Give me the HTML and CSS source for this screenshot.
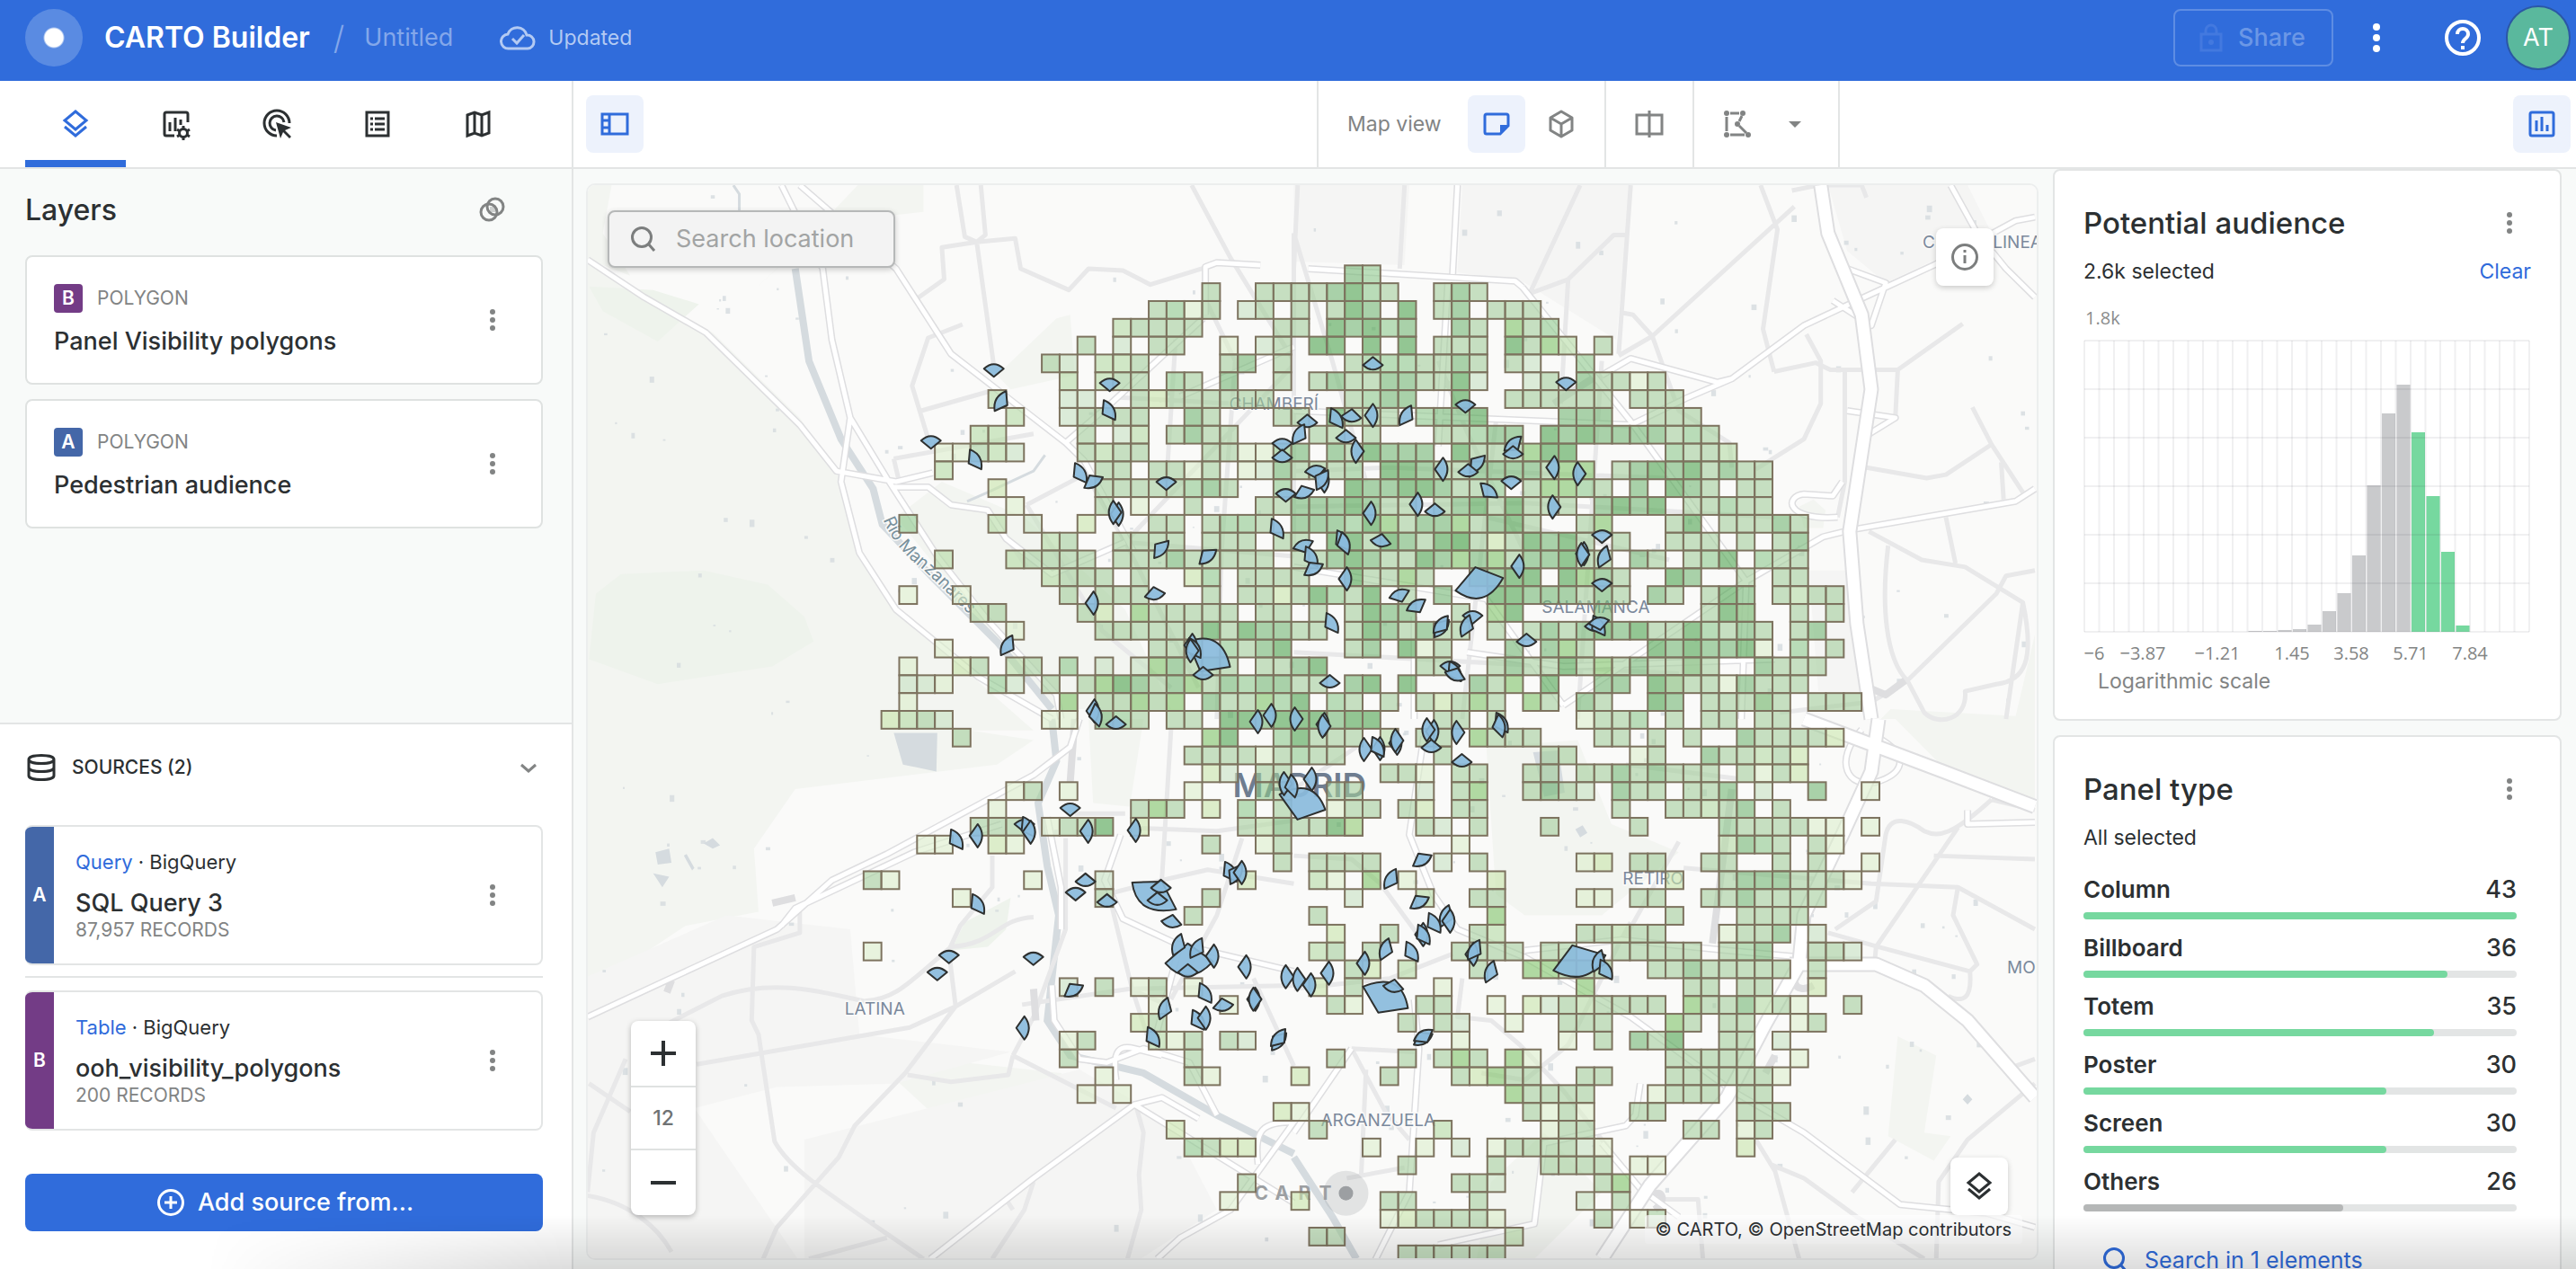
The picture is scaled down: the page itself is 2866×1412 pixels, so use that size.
FILE: index.html
```html
<!DOCTYPE html>
<html lang="en">
<head>
<meta charset="utf-8">
<title>CARTO Builder</title>
<link rel="stylesheet" href="styles.css">
</head>
<body>
<svg class="sprite" aria-hidden="true">
  <symbol id="i-layers" viewBox="0 0 36 36"><path d="M18 4 30 14 18 24 6 14ZM6 21 18 31 30 21" fill="none" stroke="currentColor" stroke-width="3"/></symbol>
  <symbol id="i-dots" viewBox="0 0 36 36"><circle cx="18" cy="9" r="3"/><circle cx="18" cy="18" r="3"/><circle cx="18" cy="27" r="3"/></symbol>
  <symbol id="i-search" viewBox="0 0 36 36"><circle cx="16" cy="16" r="10.500" fill="none" stroke="currentColor" stroke-width="3"/><path d="M23 23 30 31" stroke="currentColor" stroke-width="3"/></symbol>
  <symbol id="i-widgets" viewBox="0 0 36 36"><path d="M31 16V7a2 2 0 0 0-2-2H7a2 2 0 0 0-2 2v22a2 2 0 0 0 2 2h9M11 16v10M17 11v15M23 13v6" fill="none" stroke="currentColor" stroke-width="3"/><circle cx="26" cy="28" r="4.500" fill="none" stroke="currentColor" stroke-width="3"/><path d="M26 20v4M26 32v4M19 24l3 2M30 30l3 2M33 24l-3 2M22 30l-3 2" stroke="currentColor" stroke-width="3"/></symbol>
  <symbol id="i-click" viewBox="0 0 36 36"><path d="M18 31A14 14 0 1 1 32 17M17 25a8 8 0 1 1 9-9" fill="none" stroke="currentColor" stroke-width="3"/><path d="M17 16 34 22 27 25 34 32 32 34 25 27 22 34Z"/></symbol>
  <symbol id="i-legend" viewBox="0 0 36 36"><path d="M6 5H30V31H6ZM10 12h3M10 18h3M10 24h3M15 12h11M15 18h11M15 24h11" fill="none" stroke="currentColor" stroke-width="3"/></symbol>
  <symbol id="i-map" viewBox="0 0 36 36"><path d="M6 8 14 5 22 8 30 5V28L22 31 14 28 6 31ZM14 5V28M22 8V31" fill="none" stroke="currentColor" stroke-width="3"/></symbol>
  <symbol id="i-blend" viewBox="0 0 36 36"><circle cx="21" cy="14" r="9" fill="none" stroke="currentColor" stroke-width="3"/><circle cx="14" cy="20" r="9" fill="none" stroke="currentColor" stroke-width="3"/><path d="M15 14h6v6h-6z" opacity=".35"/></symbol>
  <symbol id="i-panel" viewBox="0 0 36 36"><path d="M4 7H32V29H4ZM12 7V29M4 14h8M4 22h8" fill="none" stroke="currentColor" stroke-width="3"/></symbol>
  <symbol id="i-note" viewBox="0 0 36 36"><path d="M31 20V9a2 2 0 0 0-2-2H7a2 2 0 0 0-2 2v18a2 2 0 0 0 2 2h15Z" fill="none" stroke="currentColor" stroke-width="3"/><path d="M22 30V19H32Z"/></symbol>
  <symbol id="i-cube" viewBox="0 0 36 36"><path d="M18 4 30 11V25L18 32 6 25V11ZM6 11 18 18 30 11M18 18V32" fill="none" stroke="currentColor" stroke-width="3" stroke-linejoin="round"/></symbol>
  <symbol id="i-split" viewBox="0 0 36 36"><path d="M4 8H32V29H4ZM18 3V33" fill="none" stroke="currentColor" stroke-width="3"/></symbol>
  <symbol id="i-poly" viewBox="0 0 36 36"><path d="M6 10V26M10 6h10M23 9l-3 6M20 20l8 8M10 30H26" stroke="currentColor" stroke-width="3"/><circle cx="6" cy="6" r="3"/><circle cx="24" cy="6" r="3"/><circle cx="18" cy="18" r="3"/><circle cx="6" cy="30" r="3"/><circle cx="30" cy="30" r="3"/></symbol>
  <symbol id="i-chart" viewBox="0 0 36 36"><rect x="5" y="5" width="26" height="26" rx="2" fill="none" stroke="currentColor" stroke-width="3"/><path d="M12 14v12M18 10v16M24 19v7" stroke="currentColor" stroke-width="3"/></symbol>
  <symbol id="i-info" viewBox="0 0 36 36"><circle cx="18" cy="18" r="13.500" fill="none" stroke="currentColor" stroke-width="3"/><path d="M18 16v9M18 10v3" stroke="currentColor" stroke-width="3"/></symbol>
  <symbol id="i-db" viewBox="0 0 36 36"><path d="M4 9c0-6 28-6 28 0v18c0 6-28 6-28 0ZM4 9c0 6 28 6 28 0M4 18c0 6 28 6 28 0" fill="none" stroke="currentColor" stroke-width="3"/></symbol>
  <symbol id="i-plus" viewBox="0 0 36 36"><circle cx="18" cy="18" r="13.500" fill="none" stroke="currentColor" stroke-width="3"/><path d="M18 11v14M11 18h14" stroke="currentColor" stroke-width="3"/></symbol>
  <symbol id="i-cloud" viewBox="0 0 40 36"><path d="M10 30a8 8 0 0 1-1-16 11 11 0 0 1 21 1 7.500 7.500 0 0 1 1 15ZM14 19l5 5 8-9" fill="none" stroke="currentColor" stroke-width="3"/></symbol>
  <symbol id="i-help" viewBox="0 0 44 44"><circle cx="22" cy="22" r="18" fill="none" stroke="currentColor" stroke-width="4"/><path d="M16 18c0-8 12-8 12 0 0 5-6 5-6 10M22 31v4" fill="none" stroke="currentColor" stroke-width="4"/></symbol>
  <symbol id="i-lock" viewBox="0 0 36 36"><path d="M7 14H29V32H7ZM12 14V10a6 6 0 0 1 12 0v4" fill="none" stroke="currentColor" stroke-width="3"/><circle cx="18" cy="23" r="3"/></symbol>
</svg>

<header class="topbar">
  <span class="logo"></span>
  <h1 class="product">CARTO Builder</h1>
  <span class="slash">/</span>
  <span class="map-name">Untitled</span>
  <span class="status"><svg class="icon cloud"><use href="#i-cloud"/></svg>Updated</span>
  <span class="grow"></span>
  <button class="share" disabled><svg class="icon"><use href="#i-lock"/></svg>Share</button>
  <button class="bare top-menu" aria-label="More options"><svg class="icon tall"><use href="#i-dots"/></svg></button>
  <button class="bare help" aria-label="Help"><svg class="icon"><use href="#i-help"/></svg></button>
  <button class="avatar">AT</button>
</header>

<div class="workspace">
  <aside class="sidebar">
    <nav class="tabs">
      <button class="tab active" aria-label="Layers"><svg class="icon"><use href="#i-layers"/></svg></button>
      <button class="tab" aria-label="Widgets"><svg class="icon"><use href="#i-widgets"/></svg></button>
      <button class="tab" aria-label="Interactions"><svg class="icon"><use href="#i-click"/></svg></button>
      <button class="tab" aria-label="Legend"><svg class="icon"><use href="#i-legend"/></svg></button>
      <button class="tab" aria-label="Basemap"><svg class="icon"><use href="#i-map"/></svg></button>
    </nav>
    <section class="layers">
      <div class="layers-head"><h2>Layers</h2><button class="bare muted" aria-label="Blending"><svg class="icon"><use href="#i-blend"/></svg></button></div>
      <article class="layer">
        <div><div class="kind"><b class="badge violet">B</b>POLYGON</div><div class="name">Panel Visibility polygons</div></div>
        <button class="bare muted" aria-label="Layer options"><svg class="icon"><use href="#i-dots"/></svg></button>
      </article>
      <article class="layer">
        <div><div class="kind"><b class="badge navy">A</b>POLYGON</div><div class="name">Pedestrian audience</div></div>
        <button class="bare muted" aria-label="Layer options"><svg class="icon"><use href="#i-dots"/></svg></button>
      </article>
    </section>
    <section class="sources">
      <div class="sources-head"><svg class="icon"><use href="#i-db"/></svg><h3>SOURCES (2)</h3><button class="bare muted" aria-label="Collapse sources"><svg class="icon" viewBox="0 0 36 36"><path d="M12 15 20 22 28 15" fill="none" stroke="currentColor" stroke-width="3"/></svg></button></div>
      <article class="source">
        <b class="strip navy">A</b>
        <div class="source-text"><div class="origin"><a href="#query">Query</a> · BigQuery</div><div class="name">SQL Query 3</div><div class="records">87,957 RECORDS</div></div>
        <button class="bare muted" aria-label="Source options"><svg class="icon"><use href="#i-dots"/></svg></button>
      </article>
      <hr>
      <article class="source">
        <b class="strip violet">B</b>
        <div class="source-text"><div class="origin"><a href="#table">Table</a> · BigQuery</div><div class="name">ooh_visibility_polygons</div><div class="records">200 RECORDS</div></div>
        <button class="bare muted" aria-label="Source options"><svg class="icon"><use href="#i-dots"/></svg></button>
      </article>
      <button class="add"><svg class="icon"><use href="#i-plus"/></svg>Add source from...</button>
    </section>
  </aside>

  <main class="stage">
    <div class="toolbar">
      <button class="tool on" aria-label="Toggle left panel"><svg class="icon"><use href="#i-panel"/></svg></button>
      <span class="grow"></span>
      <div class="group view"><span class="view-label">Map view</span><button class="tool on" aria-label="2D"><svg class="icon"><use href="#i-note"/></svg></button><button class="tool" aria-label="3D"><svg class="icon"><use href="#i-cube"/></svg></button></div>
      <div class="group"><button class="tool" aria-label="Split view"><svg class="icon"><use href="#i-split"/></svg></button></div>
      <div class="group last"><button class="tool" aria-label="Selection"><svg class="icon"><use href="#i-poly"/></svg></button><button class="tool" aria-label="Selection modes"><svg class="icon" viewBox="0 0 36 36"><path d="M11 15H25L18 22Z"/></svg></button></div>
      <span class="grow wide"></span>
      <button class="tool on" aria-label="Toggle widgets"><svg class="icon"><use href="#i-chart"/></svg></button>
    </div>

    <div class="content">
      <div class="map">
        <svg class="canvas" viewBox="654 205 1613 1196" preserveAspectRatio="xMidYMid slice" role="img" aria-label="Map of Madrid">
          <rect x="600" y="180" width="1700" height="1260" fill="#fafaf9"/>
          <g class="land">
            <g transform="translate(640 180) scale(.5102 .3954)">
              <path class="park" d="M0 250 150 390 300 480 490 720 590 910 620 1100 700 1260 1000 1600H0ZM0 60H80L60 200 120 320 0 260ZM390 360 480 250 620 60H760V140L560 170 440 300Z"/>
              <path class="park" d="M920 600 1050 440 1080 430 1090 600 950 640ZM800 900 980 1000 1200 1260 1300 1540H1040L700 1000Z"/>
              <path class="park deep" d="M30 1400 45 1215 100 1160 280 1150 420 1190 500 1280 520 1350 430 1420 180 1470ZM30 350 170 360 270 400 180 505 60 420Z"/>
              <path class="water" d="M480 300 510 560 580 780 650 920 670 1020 780 1170 920 1350 1040 1540"/>
              <path class="water thin" d="M345 65 358 90V140M855 955 900 930 1000 870 1025 825"/>
            </g>
            <g transform="translate(1440 180) scale(.5357 .3954)">
              <path class="block" d="M0 65H240L230 290 0 280ZM350 65H700L670 500 480 340 340 310ZM1110 65H1400L1450 200 1230 340 1150 250ZM1070 1150H1150L1190 1500 1090 1490Z"/>
              <path class="park" d="M1050 970 1080 950 1105 980 1100 1030 1060 1030ZM1240 1540 1500 1560 1540 1330V1568H1220Z"/>
            </g>
            <g transform="translate(640 800) scale(.5102 .3903)">
              <path class="park" d="M0 0H700L1000 60 920 130 480 200 390 370 400 550 240 590 0 800ZM1120 0H1240L1210 250 1130 240ZM700 1030 850 980 1060 1010 1180 1110 940 1220 800 1150Z"/>
              <path class="block" d="M0 750 330 560 600 600 620 900 950 950 700 1040 440 1050 260 1110 500 1568H0ZM500 1200 1100 1000 1300 1150 1400 1400 1200 1568H500Z"/>
              <path class="park deep" d="M820 660 850 580 950 510 940 600 900 650Z"/>
              <path class="lake" d="M695 40H790L788 150 715 130Z"/>
              <path class="lake" d="M175 380 205 370 210 410 180 415ZM170 440 205 450 190 480ZM280 355 300 340 316 360 300 370ZM237 390 243 385 260 425 255 432Z"/>
              <path class="water" d="M1040 0 1050 120 1010 240 1030 420 1055 560 1030 860 1080 960 1240 1010 1400 1130 1568 1240"/>
            </g>
            <g transform="translate(1440 800) scale(.5357 .3903)">
              <path class="park" d="M400 80 590 60 660 300 800 380 640 560 480 560 420 500ZM1255 905 1335 960 1310 1180 1365 1190 1330 1260 1235 1190ZM1250 0H1540V240L1380 180ZM410 1320 520 1180 640 1350 500 1540H380Z"/>
              <path class="lake" d="M497 95 550 90 563 210 520 222ZM585 315 600 303 610 325 595 338ZM1390 1085 1400 1070 1410 1085 1400 1100Z"/>
              <path class="water" d="M0 1250 80 1420 130 1540"/>
            </g>
          </g>
          <g id="buildings"></g>
          <g class="roads">
            <g transform="translate(640 180) scale(.5102 .3954)">
              <path class="minor" d="M832 65 850 210 876 225 895 205 885 65M876 225 960 215 972 300 1077 360 1120 300 1195 305 1255 345 1380 295M876 225 800 240 805 330 745 385M876 225 913 570M845 457 770 495 735 630 775 800M755 700 905 645M695 835 1000 765M695 835 705 890M1345 65 1430 270 1568 560M1180 662 1568 690M1200 1070 1568 1110M985 965 1110 880M985 965 1150 1320 1300 1480M910 1000 985 1140M1310 500 1290 900M1440 560 1410 1100 1400 1568M1200 1070 1568 570M1110 870 1200 1070 1360 1480M1380 400 1440 560M1568 200V1100"/>
              <path class="case" d="M27 275 150 380 285 480 490 740 570 870 700 900 780 875M450 65 540 300 560 500 600 720 580 900 620 1100 700 1260 880 1450 1040 1568M490 65 700 300 820 540 910 630 1070 790 1110 840 1220 1100M600 720 680 890 790 1110 900 1290 1050 1500 1060 1568M690 915 770 915 820 965 900 980 940 1060 1040 1160 1200 1070M1375 430V295L1400 283 1495 290M1070 790 1160 690 1370 440M1320 660 1568 520"/>
              <path class="major" d="M27 275 150 380 285 480 490 740 570 870 700 900 780 875M450 65 540 300 560 500 600 720 580 900 620 1100 700 1260 880 1450 1040 1568M490 65 700 300 820 540 910 630 1070 790 1110 840 1220 1100M600 720 680 890 790 1110 900 1290 1050 1500 1060 1568M690 915 770 915 820 965 900 980 940 1060 1040 1160 1200 1070M1375 430V295L1400 283 1495 290M1070 790 1160 690 1370 440M1320 660 1568 520"/>
            </g>
            <g transform="translate(1440 180) scale(.5357 .3954)">
              <path class="minor" d="M8 65 0 300M230 65 220 300M595 65 490 370 570 330 665 205H695M700 65 675 540M970 65 1005 190 975 470 998 590M1040 125 745 490 675 545M685 425 705 430 745 490 800 700 905 790 910 860M570 330 555 680M998 590 1085 565 1115 585H1255L1390 455M1065 485 1095 560V680L1060 780 960 865M1145 585V900L1130 1000M1255 585 1250 720M1190 860 1315 890 1355 880 1450 795 1410 690M1450 795 1515 930M1470 845 1475 950M1195 1040 1305 1120 1395 1140 1515 1240 1480 1568M1235 1080C1220 1250 1230 1400 1275 1460M1540 1150 1480 1165 1460 1215 1275 1460 1200 1520 1010 1550M1515 1240C1540 1400 1520 1460 1460 1470L1395 1490C1400 1570 1340 1590 1310 1550L1275 1460M1355 1000 1375 1130M0 870 200 860 780 890M0 970 480 960 1000 1000M0 200 80 560 150 900M300 560 360 760 480 1100M400 1000 780 1120M0 1380 800 1440M420 730 350 1568M640 560 590 1568M1035 80 1090 65 1180 65 1190 100"/>
              <path class="case" d="M340 65 330 315M30 300 460 335 475 352M475 352 700 730 940 1180M0 700 700 740M640 600 700 553 880 620 910 610M1365 65 1420 200 1480 300 1540 380M620 610 540 680M1540 155 1500 165 1330 290 1170 390 1060 460 910 610 815 665 700 740M1195 1480 1230 1500 1270 1460M1540 920 1500 955 1160 1035 1100 1055 940 1180 560 1530M0 1140 400 1230 560 1530M250 1280 250 1568M320 340 300 800M1120 390 1200 460 1230 340 1150 300M1150 700 1250 720 1190 770M1130 1000C1020 1010 1020 940 1060 935L1120 940 1140 900M360 1380 560 1420 1000 1400M940 1180 930 1568"/>
              <path class="major" d="M340 65 330 315M30 300 460 335 475 352M475 352 700 730 940 1180M0 700 700 740M640 600 700 553 880 620 910 610M1365 65 1420 200 1480 300 1540 380M1540 155 1500 165 1330 290 1170 390 1060 460 910 610 815 665 700 740M1540 920 1500 955 1160 1035 1100 1055 940 1180 560 1530M0 1140 400 1230 560 1530M250 1280 250 1568M320 340 300 800M1120 390 1200 460 1230 340 1150 300M1150 700 1250 720 1190 770M1130 1000C1020 1010 1020 940 1060 935L1120 940 1140 900M360 1380 560 1420 1000 1400M940 1180 930 1568"/>
              <path class="case big" d="M1095 65 1110 200 1180 430 1200 640 1155 1040 1170 1300 1200 1568"/><path class="major big" d="M1095 65 1110 200 1180 430 1200 640 1155 1040 1170 1300 1200 1568"/>
            </g>
            <g transform="translate(640 800) scale(.5102 .3903)">
              <path class="minor" d="M200 870 320 790C440 740 540 780 630 805 700 800 730 750 820 650 920 640 920 570 1000 565M910 390V480L840 590 815 660 830 820 720 1010 610 1160 575 1250 440 1450 410 1540M490 550 490 610 390 650 385 860 400 900 435 1205C470 1290 560 1360 760 1540M265 985 730 880 830 820 960 720M725 1015 820 1035 945 1015 955 960M955 960 1180 1110M27 1360C120 1380 180 1450 210 1520M510 1540 680 1480M110 970 70 1090 40 1180 27 1350M30 1040 120 1120M1225 1110 1240 1180 1230 1300 1235 1400 1205 1540M1000 1320 980 1400 910 1540M975 815 1210 770 1300 820M1210 770 1568 760M1090 270H1200M1210 310 1400 320 1568 290M1070 340V600L1000 850 955 960M1170 530 1215 770 1260 950M1300 30 1280 460 1160 500M1480 740 1568 990M1455 340 1400 560 1300 800M1280 460 1380 430 1568 470M940 1370 955 1400"/>
              <path class="case" d="M27 850 200 745 440 600 560 460 680 385 1000 160 1080 80 1100 0M450 590 480 540 740 380 930 300M775 1540 1000 1310 1220 1100 1568 1380M1270 1540 1320 1480 1430 1400 1568 1150M1090 0 1080 180M1190 330 1155 460 1195 570 1310 640 1568 720M1040 760 1045 860 1100 970 1160 980 1240 940 1340 980 1400 1130M1220 1100 1280 1080 1360 1140M1180 1030C1170 940 1190 930 1220 940L1280 960M1060 600V480L1030 280M1000 770 1005 860M1490 1270C1480 1170 1500 1150 1568 1150M1320 640 1260 940M200 780 210 745M430 525 480 510"/>
              <path class="major" d="M27 850 200 745 440 600 560 460 680 385 1000 160 1080 80 1100 0M450 590 480 540 740 380 930 300M775 1540 1000 1310 1220 1100 1568 1380M1270 1540 1320 1480 1430 1400 1568 1150M1190 330 1155 460 1195 570 1310 640 1568 720M1040 760 1045 860 1100 970 1160 980 1240 940 1340 980 1400 1130M1220 1100 1280 1080 1360 1140M1180 1030C1170 940 1190 930 1220 940L1280 960M1060 600V480L1030 280M1490 1270C1480 1170 1500 1150 1568 1150M1320 640 1260 940"/>
            </g>
            <g transform="translate(1440 800) scale(.5357 .3903)">
              <path class="minor" d="M0 390 120 400 180 470 260 620M0 200 130 80M690 130 920 170M810 425 1200 470 1380 480 1540 600M1125 600 1210 520 1230 330C1240 270 1280 290 1310 320 1340 340 1370 330 1450 230M1540 260 1450 230M1380 310 1240 590 1210 650 1205 720M1380 480 1370 560 1420 700 1405 720 1215 650 1110 610M1405 720C1410 800 1390 810 1360 790M1540 1040 1400 1200 1340 1320 1335 1540M1540 970 1500 990M990 1270 1060 1310 1170 1420 1310 1540M120 940 250 950M120 940 190 1120 240 1200M150 1000 140 1300M110 1310 230 1280M350 740 340 850 410 860 470 930 560 1060 640 1200 720 1340M390 1010 480 1030 570 930 680 630 700 580M750 1370H840L850 1540M800 350 690 620M1160 1350 1250 1200M0 770 200 740 330 670M1330 390 1540 400M960 1200 1000 1290 1050 1540"/>
              <path class="case" d="M270 50 240 330 290 500 340 600 480 680 700 850 910 1060 1060 1180 1260 1385 1440 1410 1540 1450M120 940 0 1180M250 800 260 940 240 1350 160 1568M720 1040 710 1130 690 1160 520 1210 500 1440 300 1500M1180 30C1120 120 1150 200 1210 180 1260 160 1290 110 1210 50M1540 295 1400 300 1400 260M480 660 680 630 900 660 1060 680M1070 680C1020 740 1040 790 1080 760M980 1010 1000 960M910 200 870 640M640 1210 720 1340 800 1420M740 1370C760 1330 780 1370 750 1400"/>
              <path class="major" d="M270 50 240 330 290 500 340 600 480 680 700 850 910 1060 1060 1180 1260 1385 1440 1410 1540 1450M120 940 0 1180M250 800 260 940 240 1350 160 1568M1180 30C1120 120 1150 200 1210 180 1260 160 1290 110 1210 50M1540 295 1400 300 1400 260M480 660 680 630 900 660 1060 680M720 1040 710 1130 690 1160 520 1210 500 1440 300 1500M640 1210 720 1340 800 1420"/>
              <path class="case big" d="M1215 0 1200 150 1140 330 1060 560 1050 700 980 870 900 1080 740 1330 640 1540M1030 700 1210 700 1310 760 1400 860 1540 1080M1060 0 1350 150 1540 250"/><path class="major big" d="M1215 0 1200 150 1140 330 1060 560 1050 700 980 870 900 1080 740 1330 640 1540M1030 700 1210 700 1310 760 1400 860 1540 1080M1060 0 1350 150 1540 250"/>
            </g>
          </g>
          <g class="place">
            <text x="1368" y="456">CHAMBERÍ</text><text x="1716" y="682">SALAMANCA</text><text x="1806" y="984">RETIRO</text>
            <text x="940" y="1129">LATINA</text><text x="1470" y="1253">ARGANZUELA</text><text x="2234" y="1083">MORATALAZ</text><text x="2140" y="276">CIUDAD LINEAL</text>
            <text class="city" x="1372" y="887">MADRID</text>
            <path id="river" d="M983 578Q995 610 1030 636L1100 704" fill="none"/>
            <text class="river"><textPath href="#river">Río Manzanares</textPath></text>
          </g>
          <g class="mark"><circle cx="1498" cy="1328" r="25" opacity=".25"/><circle cx="1498" cy="1328" r="8"/><text x="1396" y="1335">C</text><text x="1419" y="1335">A</text><text x="1445" y="1335">R</text><text x="1468" y="1335">T</text></g>
          <g id="cells"></g>
          <g id="fans"></g>
        </svg>
        <label class="search"><svg class="icon"><use href="#i-search"/></svg><input type="text" placeholder="Search location" aria-label="Search location"></label>
        <button class="float info" aria-label="Map information"><svg class="icon"><use href="#i-info"/></svg></button>
        <div class="zoom"><button aria-label="Zoom in"><svg class="icon" viewBox="0 0 36 36"><path d="M18 4V32M4 18H32" stroke="currentColor" stroke-width="4"/></svg></button><span>12</span><button aria-label="Zoom out"><svg class="icon" viewBox="0 0 36 36"><path d="M4 18H32" stroke="currentColor" stroke-width="4"/></svg></button></div>
        <button class="float basemap" aria-label="Legend"><svg class="icon"><use href="#i-layers"/></svg></button>
        <div class="credit">© CARTO, © OpenStreetMap contributors</div>
      </div>

      <aside class="widgets">
        <section class="widget">
          <div class="widget-head"><h2>Potential audience</h2><button class="bare muted" aria-label="Widget options"><svg class="icon"><use href="#i-dots"/></svg></button></div>
          <div class="selected"><span>2.6k selected</span><a href="#clear">Clear</a></div>
          <div class="max">1.8k</div>
          <svg class="chart" viewBox="0 0 498 364" role="img" aria-label="Histogram of potential audience"><g id="histogram"></g></svg>
          <div class="scale">Logarithmic scale</div>
        </section>
        <section class="widget">
          <div class="widget-head"><h2>Panel type</h2><button class="bare muted" aria-label="Widget options"><svg class="icon"><use href="#i-dots"/></svg></button></div>
          <div class="selected"><span>All selected</span></div>
          <ul class="types">
            <li><b>Column</b><span>43</span><i><em style="width:100%"></em></i></li>
            <li><b>Billboard</b><span>36</span><i><em style="width:84%"></em></i></li>
            <li><b>Totem</b><span>35</span><i><em style="width:81%"></em></i></li>
            <li><b>Poster</b><span>30</span><i><em style="width:70%"></em></i></li>
            <li><b>Screen</b><span>30</span><i><em style="width:70%"></em></i></li>
            <li class="others"><b>Others</b><span>26</span><i><em style="width:60%"></em></i></li>
          </ul>
          <button class="bare find"><svg class="icon"><use href="#i-search"/></svg>Search in 1 elements</button>
        </section>
      </aside>
    </div>
  </main>
</div>
<div class="shade"></div>
<script src="map.js"></script>
</body>
</html>
```
FILE: styles.css
```css
* { box-sizing: border-box; }
body { margin: 0; height: 100vh; display: flex; flex-direction: column; overflow: hidden; font-family: Inter, "Liberation Sans", sans-serif; font-size: 23px; line-height: 32px; color: #2c3032; background: #f8faf9; }
h1, h2, h3, ul { margin: 0; padding: 0; font-weight: 500; }
button { font: inherit; color: inherit; border: 0; background: none; padding: 0; }
a { color: #2f6bdb; text-decoration: none; }
.sprite { position: absolute; width: 0; height: 0; }
.icon { width: 36px; height: 36px; flex: none; display: block; fill: currentColor; }
.grow { flex: 1; }
.bare { display: flex; align-items: center; justify-content: center; }
.muted { color: #828484; }

.topbar { height: 90px; flex: none; display: flex; align-items: center; padding: 0 6px 6px 28px; background: #306cdb; color: #fff; }
.logo { width: 64px; height: 64px; border-radius: 50%; background: radial-gradient(circle, #fff 10px, #5a8be2 12px); }
.product { margin-left: 24px; font-size: 32px; font-weight: 600; line-height: 40px; }
.slash { margin-left: 26px; font-size: 36px; font-weight: 300; color: #83a7ea; }
.map-name { margin-left: 22px; font-size: 27px; color: #83a7ea; }
.status { display: flex; align-items: center; gap: 14px; margin-left: 52px; font-size: 23px; color: #b3caf3; }
.icon.cloud { width: 40px; }
.share { display: flex; align-items: center; gap: 12px; width: 178px; height: 64px; padding: 0 22px; border: 2px solid #5e8de3; border-radius: 8px; color: #6b97e6; font-size: 27px; font-weight: 500; }
.share .icon { color: #4379df; }
.top-menu { width: 64px; margin-left: 16px; }
.icon.tall { width: 48px; height: 48px; }
.help { margin-left: 42px; width: 44px; }
.help .icon { width: 44px; height: 44px; }
.avatar { width: 72px; height: 72px; margin-left: 26px; border: 2px solid #2b57a5; border-radius: 50%; background: #5ab89d; font-size: 27px; }

.workspace { flex: 1; min-height: 0; display: flex; }
.sidebar { width: 638px; flex: none; display: flex; flex-direction: column; border-right: 2px solid #e3e5e5; }
.tabs { height: 98px; flex: none; display: flex; padding-left: 28px; background: #fff; border-bottom: 2px solid #e3e5e5; }
.tab { width: 112px; display: flex; align-items: center; justify-content: center; border-bottom: 8px solid transparent; border-top: 8px solid transparent; }
.tab.active { color: #306cdb; border-bottom-color: #306cdb; }
.layers { flex: 1; padding: 20px 32px 0 28px; display: flex; flex-direction: column; gap: 16px; }
.layers-head { display: flex; justify-content: space-between; align-items: center; height: 52px; margin-bottom: 8px; padding-right: 38px; }
h2 { font-size: 32px; line-height: 40px; }
.layer { display: flex; align-items: center; justify-content: space-between; height: 144px; padding: 0 36px 0 30px; background: #fff; border: 2px solid #dfe2e1; border-radius: 8px; }
.kind { display: flex; align-items: center; gap: 16px; font-size: 21px; color: #828484; }
.badge { width: 32px; height: 32px; border-radius: 4px; color: #fff; font-weight: 600; font-size: 21px; text-align: center; }
.violet { background: #733c86; }
.navy { background: #4467a8; }
.name { font-size: 27px; line-height: 32px; font-weight: 500; }
.layer .name { margin-top: 16px; }
.sources { flex: none; background: #fff; border-top: 2px solid #e3e5e5; padding: 0 32px 42px 28px; }
.sources-head { display: flex; align-items: center; height: 96px; margin-bottom: 16px; }
.sources-head h3 { flex: 1; margin-left: 16px; font-size: 21px; }
.source { display: flex; align-items: center; height: 156px; padding-right: 36px; border: 2px solid #e3e5e5; border-left: 0; border-radius: 8px; overflow: hidden; }
.strip { align-self: stretch; width: 32px; display: flex; align-items: center; justify-content: center; color: #fff; font-size: 21px; font-weight: 600; }
.source-text { flex: 1; padding-left: 24px; }
.origin { font-size: 22px; margin-bottom: 14px; }
.records { font-size: 21px; line-height: 28px; color: #828484; }
hr { border: 0; border-top: 2px solid #e3e5e5; margin: 12px 0 14px; }
.add { width: 100%; height: 64px; margin-top: 48px; display: flex; align-items: center; justify-content: center; gap: 12px; background: #306cdb; border-radius: 8px; color: #fff; font-size: 27px; font-weight: 500; }

.stage { flex: 1; min-width: 0; display: flex; flex-direction: column; }
.toolbar { height: 98px; flex: none; display: flex; align-items: center; padding: 0 6px 0 14px; background: #fff; border-bottom: 2px solid #e3e5e5; }
.tool { width: 64px; height: 64px; display: flex; align-items: center; justify-content: center; border-radius: 8px; color: #828484; }
.tool.on { background: #edf2fc; color: #306cdb; }
.group { height: 96px; display: flex; align-items: center; padding: 0 16px; border-left: 2px solid #e3e5e5; }
.group.view { gap: 8px; }
.view-label { width: 142px; padding-left: 16px; color: #828484; font-size: 23px; white-space: nowrap; }
.group.last { border-right: 2px solid #e3e5e5; }
.content { flex: 1; min-height: 0; display: flex; }
.map { position: relative; flex: 1; min-width: 0; margin: 16px 16px 10px 14px; border: 2px solid #eceeee; border-radius: 10px; overflow: hidden; }
.canvas { display: block; width: 100%; height: 100%; }
.roads path { fill: none; vector-effect: non-scaling-stroke; stroke-linejoin: round; }
.roads .minor { stroke: #e8e8e9; stroke-width: 5px; }
.roads .case { stroke: #dedee0; stroke-width: 8px; }
.roads .major { stroke: #fff; stroke-width: 5px; }
.roads .case.big { stroke-width: 17px; }
.roads .major.big { stroke-width: 13px; }
.park { fill: #f3f5f1; }
.park.deep { fill: #eef3ec; }
.block { fill: #f5f5f4; }
.lake, #buildings { fill: #d5dbdf; }
.water { fill: none; stroke: #d5dbdf; stroke-width: 8px; vector-effect: non-scaling-stroke; }
.water.thin { stroke-width: 3px; }
.place { font-family: Inter, sans-serif; font-size: 19px; fill: #7b899c; }
.place text { stroke: #fafaf9; stroke-width: 3px; paint-order: stroke; }
.place .city { font-size: 37px; font-weight: 600; fill: #6f7d90; }
.place .river { font-size: 19px; fill: #78909c; }
.mark { fill: #9c9fa2; font-size: 21px; font-weight: 700; }
#cells rect { stroke: #7d735f; stroke-width: 2px; fill-opacity: .6; }
#fans path { fill: #8abbdc; fill-opacity: .92; stroke: #2e302f; stroke-width: 2px; stroke-linejoin: round; vector-effect: non-scaling-stroke; }
.search { position: absolute; left: 22px; top: 28px; width: 320px; height: 64px; display: flex; align-items: center; gap: 16px; padding: 0 20px; background: #f3f3f3; border: 2px solid #b6b8b8; border-radius: 8px; box-shadow: 0 2px 6px #0003; color: #7c7e7e; }
.search input { width: 220px; border: 0; background: none; font: inherit; font-size: 27px; outline: 0; }
.search input::placeholder { color: #a2a4a4; opacity: 1; }
.float { position: absolute; width: 64px; height: 64px; display: flex; align-items: center; justify-content: center; background: #fff; border-radius: 8px; box-shadow: 0 2px 6px #0003; }
.info { right: 48px; top: 48px; color: #7c7e7e; }
.basemap { right: 32px; bottom: 48px; }
.zoom { position: absolute; left: 48px; bottom: 48px; width: 72px; background: #fff; border-radius: 8px; box-shadow: 0 2px 6px #0004; text-align: center; font-weight: 500; }
.zoom button, .zoom span { height: 72px; width: 72px; display: flex; align-items: center; justify-content: center; color: #2c3032; }
.zoom span { color: #6f7374; border: solid #dfe2e1; border-width: 2px 0; }
.credit { position: absolute; right: 16px; bottom: 16px; padding: 0 12px; background: #fffa; border-radius: 4px; font-size: 20px; line-height: 32px; }

.widgets { width: 582px; flex: none; padding-right: 16px; display: flex; flex-direction: column; gap: 16px; overflow: hidden; }
.widget { flex: none; background: #fff; border: 2px solid #e3e5e5; border-radius: 8px; padding: 36px 32px 26px; }
.widget-head { display: flex; align-items: center; justify-content: space-between; height: 44px; padding-right: 6px; }
.widget h2 { font-size: 33px; }
.selected { display: flex; justify-content: space-between; margin-top: 16px; height: 32px; }
.max { margin-top: 20px; font-family: "Open Sans", sans-serif; font-size: 20px; color: #8a8c8c; padding-left: 2px; }
.chart { display: block; width: 100%; margin-top: 8px; overflow: visible; font-family: "Open Sans", sans-serif; font-size: 20px; fill: #828484; }
.scale { padding-left: 16px; color: #828484; }
#histogram .axis { stroke: #2c3032; stroke-opacity: .07; stroke-width: 2px; }
#histogram .out { fill: #c9cacc; }
#histogram .in { fill: #76d89f; }
.types { list-style: none; display: grid; gap: 14px; margin-top: 24px; padding-right: 16px; }
.types li { display: grid; grid-template-columns: 1fr auto; row-gap: 7px; font-size: 27px; line-height: 36px; }
.types b { font-weight: 600; font-size: 26px; }
.types i { grid-column: 1 / 3; height: 8px; border-radius: 4px; background: #e3e5e5; }
.types em { display: block; height: 8px; border-radius: 4px; background: #76d89f; }
.types .others em { background: #b5b7b7; }
.find { margin: 36px 0 0 18px; gap: 14px; color: #2f6bdb; font-size: 25px; }
.shade { position: fixed; left: 0; right: 0; bottom: 0; height: 60px; pointer-events: none; background: linear-gradient(to top, #0002, #0000); -webkit-mask: linear-gradient(to right, #0000 8%, #000 22%); mask: linear-gradient(to right, #0000 8%, #000 22%); }
```
FILE: map.js
```js
const NS = 'http://www.w3.org/2000/svg';
function add(parent, tag, attrs, text) {
  const el = document.createElementNS(NS, tag);
  for (const k in attrs) el.setAttribute(k, attrs[k]);
  if (text) el.textContent = text;
  parent.appendChild(el);
}

// Audience grid: one line per row, each run is "first column:shade codes".
const shades = { 1: '#dceecb', d: '#c6e1c1', y: '#c8e4aa', 2: '#b4daa3', 3: '#a3cd9b', m: '#8ec88c', g: '#7fc367', 4: '#73b673', 5: '#4ea34e' };
const grid = `27:4m
19:3 22:333345m3 32:343
16:3m13 21:d3.3.354.5 32:34.333
14:23333 23:33.545m4 33:43.g3m
12:3.d.33 20:1.d3.55.5.5 32:333 36:53g2 41:3
10:3d.223 20:34.3 27:3mmm3343 36:3d..m
11:2.23.. 15:3 17:m3.4..3 25:343344335d 37:d3.43313
7:2 11:dd..3y333333 27:3m44..5 36:333333.333
8:2..d3333 18:43 23:33.5333.m445 39:444..333
6:22 12:3.d2.3433 25:33.3...33m44.54544443m3
4:1132d 12:3233 19:3311m4.435444.5333g55.....m332
4:2 13:33.3313.1d4333m.5543344443gg.345453433
7:y 13:33333m43..m...54455433m.3ggm3.4.543.33
8:1 13:3.1..3...334445433.34535333.4545.33m33
2:m....2.d..y...33.3mm3.444m5g344g3453..3g...35.33343
10:23..3333.333.33.55354354 33:43y35453.3..333.3.34
4:2...23333.3334333 21:33.33454335 32:4g4g344533.43.3m5.m33
10:2333.3..ym.3333..533g3..4455.5g43..54..3.33
2:1..1 11:3.333...3.33y35m35.3.4..55444343.43.354.3233
6:23 12:3y.g33333.33.3.3544..3.g5....4.....354 49:3..3.3
8:1 13:3333335354433.3543433.3.3434545335m343.34
4:1 16:333.m345...34.513...4.4g3...5454451.m.3
2:1..y3.23.m.d.dg4333.3345 28:...33..343353g34334 46:33..4333
2:dd1..md.3.3g5434g34m4433 27:45.5...43g.5..44.53 45:3331 49:4333
2:1 11:g.33g3g.433gm5.m3.3.3y3g3.g3.43..54.3334 50:33.333
1:y23d 10:11.4m3.33.554555455 32:33 35:3 40:133m.3.33.33
5:3 19:g5..m5333.2.33.g333 41:33.3.3..43333y
18:333313m33 32:3 38:33 41:..13..43323y
19:yd.33 29:331.33 37:33.33434333.313y
8:13.1 18:1 22:m3 26:33 31:d.3g 37:343d.433.334 50:d..4..1
7:1 15:3g3.y.m.3..133 30:3y.33 42:3..332 48:34.3
6:333.1335.y 21:3243354 27:y 31:3d.3...3....3 48:m33331 54:1.1
3:11..y1 19:3..13 33:1 48:24m3.31
23:3.3333 32:d.3 40:1y.33..33..3.3..1
0:31 9:1...d 21:y 25:21.g.1 35:y 45:y..34443331
5:1 13:3 19:3 27:d...2..33 40:11.33..3343333
18:3 25:3 35:g 45:3 49:3333
26:y..3 34:32 40:33233 48:1334.d
0:1 25:23.3 33:3333 38:33..33333.3m4..33d
27:3y.2...3..gg333..33433333.3
11:d.3.13.1 25:y.3 32:1.......g 46:33.33..y
16:1 20:1 26:31 31:33..1.yd323333.g334231..3
15:y3 30:3.3d 36:1..333...g3.33..13
11:13 16:213.3d 33:1.....1.3.435 48:33.d
11:3 18:3 26:3...3.3g3.g1 45:33333..1
13:1 18:31 24:y....3 33:3yg33 40:33 45:3333331
12:1.1 36:g3333 44:1333 49:33
23:y1 37:3131 43:33 49:333
17:y 25:3 32:2 38:133 46:33 49:13
18:m3yy 28:1..1.d 35:13333d1 49:y
30:3 35:3 38:3333 43:11
21:3 33:33d 41:3g
20:1 24:y 29:33 34:3 40:d.3
29:1y33331 41:3.13
25:33 36:2
30:333333`;
const cells = document.getElementById('cells');
grid.split('\n').forEach((line, row) => line.split(' ').forEach(run => {
  const [start, codes] = run.split(':');
  [...(codes || '')].forEach((c, i) => {
    if (shades[c]) add(cells, 'rect', { x: 961 + 19.84 * (+start + i), y: 295 + 19.84 * row, width: 19.84, height: 19.84, fill: shades[c] });
  });
}));

// Visibility fans: x, y, facing angle.
const fans = `1528,404,180 1743,427,0 1631,452,0 1455,468,180 1447,484,300 1486,466,60 1504,462,185 1526,462,90 1566,463,300 1498,485,180 1511,502,270 1427,495,0 1427,507,180 1685,495,320 1684,503,180 1604,522,90 1643,515,130 1634,523,180 1728,520,90 1758,527,270 1682,537,0 1656,547,40 1464,525,350 1472,535,90 1470,533,120 1431,551,0 1451,547,160 1298,538,0 1243,572,90 1241,570,270 1524,571,90 1576,561,90 1597,567,180 1730,564,270 1420,589,60 1291,610,130 1343,618,140 1451,608,340 1458,620,60 1461,632,150 1493,602,60 1495,605,75 1537,601,190 1497,644,90 1285,660,170 1481,694,60 1558,663,340 1577,675,330 1689,630,90 1603,698,130 1605,696,310 1639,687,0 1633,697,290 1699,712,180 1614,743,0 1618,748,60 1620,750,200 1480,758,180 1339,749,180 1325,718,90 1328,722,60 1327,724,270 1761,616,90 1762,617,270 1783,597,0 1786,620,290 1783,651,0 1775,695,180 1778,697,60 1780,694,350 1106,412,0 1115,447,300 1036,492,0 1084,512,60 1235,428,0 1233,457,60 1201,527,60 1216,535,150 1215,671,90 1122,719,300 1216,791,90 1219,796,80 1242,804,180 1398,803,90 1413,796,90 1443,800,270 1472,806,90 1474,808,270 1670,805,60 1668,808,80 1594,814,90 1590,812,270 1623,815,270 1593,830,180 1520,834,270 1534,833,90 1532,832,60 1553,827,90 1555,824,270 1627,846,180 1458,867,90 1431,872,270 1437,875,80 1191,901,0 1209,925,90 1262,924,90 1063,935,60 1086,930,90 1140,919,0 1143,921,60 1145,926,90 1208,979,180 1197,995,0 1232,1002,180 1087,1007,60 1304,1025,190 1368,971,60 1374,972,120 1380,971,90 1312,1052,290 1333,1056,300 1349,1064,90 1385,1076,90 1433,1087,270 1340,1106,60 1361,1118,170 1395,1112,90 1397,1112,270 1297,1123,290 1332,1136,60 1340,1133,90 1282,1155,60 1422,1158,130 1424,1156,310 1150,1067,0 1056,1065,0 1043,1084,0 1194,1101,150 1138,1144,90 1582,956,150 1549,979,300 1579,1003,150 1610,1020,290 1612,1025,90 1595,1028,60 1582,1040,90 1583,1041,60 1543,1057,290 1570,1060,60 1517,1072,90 1477,1083,90 1446,1090,270 1457,1096,90 1638,1062,90 1642,1058,300 1660,1082,290 1583,1155,150 1585,1154,330`;
const layer = document.getElementById('fans');
['M1336 747 1322 714Q1360 700 1369 742Z', 'M1642 631 1673 643Q1652 680 1620 657Z', 'M1444 912 1424 884Q1462 864 1475 901Z', 'M1309 1012 1293 981 1260 982Q1265 1020 1309 1012Z', 'M1322 1050 1297 1072Q1322 1100 1350 1070Z', 'M1750 1052 1787 1063Q1768 1100 1729 1080Z', 'M1534 1127 1517 1098Q1560 1080 1567 1122Z'].forEach(d => add(layer, 'path', { d }));
(fans + ' 1292,986,180 1288,1000,180 1322,1080,180 1780,1070,290 1786,1080,60 1551,1097,190').split(' ').forEach(f => {
  const [x, y, a] = f.split(',').map(Number);
  const s = 1 + 0.18 * Math.abs(Math.sin(a * Math.PI / 180));
  add(layer, 'path', { d: 'M0 7 -11 -2Q0 -12 11 -2Z', transform: `translate(${x} ${y}) rotate(${a}) scale(${s} 1)` });
});

// Small building footprints scattered outside the centre.
const buildings = document.getElementById('buildings');
let seed = 7;
const rnd = () => (seed = (seed * 16807) % 2147483647) / 2147483647;
for (let i = 0; i < 260; i++) {
  const x = 670 + rnd() * 1590, y = 215 + rnd() * 1180, s = 2 + rnd() * 4;
  add(buildings, 'rect', { x, y, width: s, height: s * (0.6 + rnd()), opacity: 0.8 });
}

// Histogram of audience, 30 bins.
const h = document.getElementById('histogram');
const bins = { 11: 1, 12: 1, 13: 2, 14: 3, 15: 8, 16: 23, 17: 43, 18: 85, 19: 163, 20: 243, 21: 275, 22: 222, 23: 151, 24: 89, 25: 7 };
for (const b in bins) add(h, 'rect', { class: b > 21 ? 'in' : 'out', x: 2 + 16.5 * b, y: 325 - bins[b], width: 15, height: bins[b] });
for (let i = 0; i <= 30; i++) add(h, 'path', { class: 'axis', d: `M${1 + 16.5 * i} 1V325` });
for (let i = 0; i <= 6; i++) add(h, 'path', { class: 'axis', d: `M1 ${1 + 54 * i}H496` });
[[12, '−6'], [66, '−3.87'], [149, '−1.21'], [232, '1.45'], [298, '3.58'], [364, '5.71'], [430, '7.84']].forEach(([x, t]) =>
  add(h, 'text', { x, y: 356, 'text-anchor': 'middle' }, t));
```
